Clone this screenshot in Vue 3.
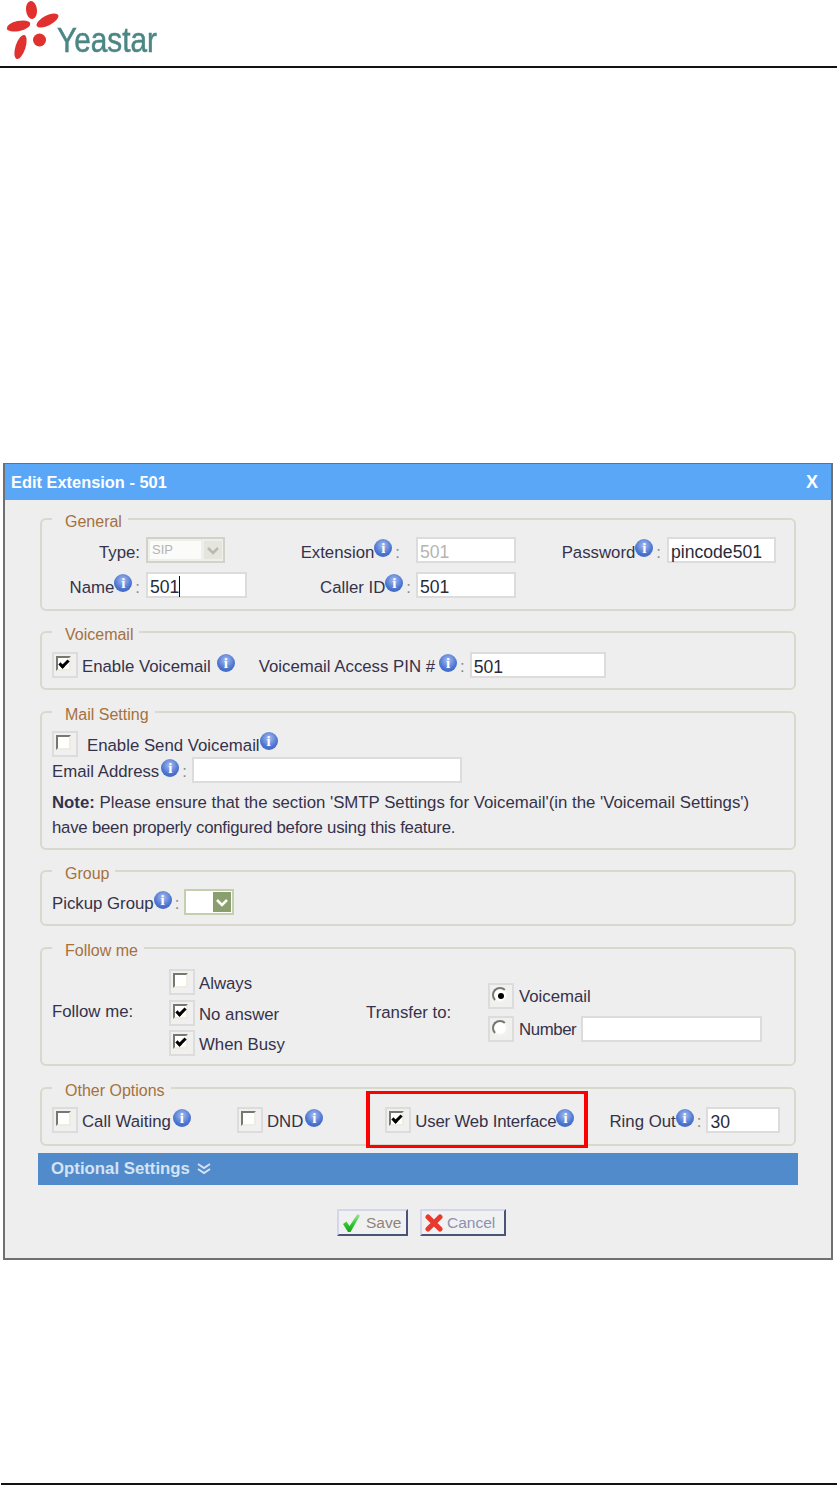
<script setup>
</script>

<template>
  <div class="page">
    <header class="head">
      <svg class="logo" width="200" height="66" viewBox="0 0 200 66">
        <g class="soft" fill="#e0312f">
          <ellipse cx="31.500" cy="10" rx="5.500" ry="9" transform="rotate(-6 31.500 10)" />
          <ellipse cx="47.500" cy="20.500" rx="12" ry="5" transform="rotate(-27 47.500 20.500)" />
          <ellipse cx="18.500" cy="26" rx="12" ry="5" transform="rotate(-12 18.500 26)" />
          <ellipse cx="20.500" cy="47" rx="5" ry="12.500" transform="rotate(18 20.500 47)" />
          <circle cx="39.500" cy="40" r="6.500" />
        </g>
        <text class="soft" x="57" y="52" font-size="35" textLength="100" lengthAdjust="spacingAndGlyphs" fill="#4a8684" stroke="#4a8684" stroke-width="0.500" font-family="'Liberation Sans', sans-serif">Yeastar</text>
      </svg>
    </header>
    <div class="rule"></div>

    <section class="dialog">
      <div class="title"><span>Edit Extension - 501</span><span class="close">X</span></div>
      <div class="body">
        <fieldset class="box general">
          <legend>General</legend>
          <div class="grid">
            <label class="lab">Type:</label>
            <div class="select disabled"><span class="sel-text">SIP</span><span class="sel-btn"><svg width="14" height="9" viewBox="0 0 14 9"><path d="M2 2l5 5 5-5" fill="none" stroke="#b9b9b2" stroke-width="2.500" /></svg></span></div>
            <label class="lab pr16">Extension<i class="info">i</i><span class="colon">:</span></label>
            <div class="input w100 muted">501</div>
            <label class="lab">Password<i class="info">i</i><span class="colon">:</span></label>
            <div class="input w109">pincode501</div>
            <label class="lab">Name<i class="info">i</i><span class="colon">:</span></label>
            <div class="input w101">501<span class="caret"></span></div>
            <label class="lab pr5">Caller ID<i class="info">i</i><span class="colon">:</span></label>
            <div class="input w100">501</div>
          </div>
        </fieldset>

        <fieldset class="box voicemail">
          <legend>Voicemail</legend>
          <div class="row">
            <span class="check on"></span>
            <span class="txt gap4">Enable Voicemail</span>
            <i class="info ml6">i</i>
            <span class="txt ml24">Voicemail Access PIN #</span><i class="info ml4">i</i><span class="txt colon">:</span>
            <div class="input w136 ml5">501</div>
          </div>
        </fieldset>

        <fieldset class="box mail">
          <legend>Mail Setting</legend>
          <div class="row h27">
            <span class="check"></span>
            <span class="txt gap9">Enable Send Voicemail</span><i class="info">i</i>
          </div>
          <div class="row">
            <span class="txt">Email Address</span><i class="info ml2">i</i><span class="txt colon">:</span>
            <div class="input w270 ml5"></div>
          </div>
          <p class="note"><b>Note:</b> Please ensure that the section 'SMTP Settings for Voicemail'(in the 'Voicemail Settings')
            <span class="line2">have been properly configured before using this feature.</span></p>
        </fieldset>

        <fieldset class="box group">
          <legend>Group</legend>
          <div class="row">
            <span class="txt">Pickup Group</span><i class="info">i</i><span class="txt colon">:</span>
            <div class="select green ml5"><span class="sel-text"></span><span class="sel-btn"><svg width="14" height="9" viewBox="0 0 14 9"><path d="M2 2l5 5 5-5" fill="none" stroke="#fff" stroke-width="2.500" /></svg></span></div>
          </div>
        </fieldset>

        <fieldset class="box follow">
          <legend>Follow me</legend>
          <div class="row">
            <span class="f-label">Follow me:</span>
            <div class="stack options">
              <div class="row h30"><span class="check"></span><span class="txt gap4">Always</span></div>
              <div class="row h30"><span class="check on"></span><span class="txt gap4">No answer</span></div>
              <div class="row h30"><span class="check on"></span><span class="txt gap4">When Busy</span></div>
            </div>
            <span class="t-label">Transfer to:</span>
            <div class="stack">
              <div class="row h33"><span class="check radio on"></span><span class="txt-s gap5">Voicemail</span></div>
              <div class="row h33"><span class="check radio"></span><span class="txt-s gap5 tight">Number</span><div class="input w181 ml5"></div></div>
            </div>
          </div>
        </fieldset>

        <fieldset class="box other">
          <legend>Other Options</legend>
          <div class="row other-row">
            <span class="check"></span><span class="txt gap4">Call Waiting</span><i class="info ml2">i</i>
            <span class="check ml46"></span><span class="txt gap4">DND</span><i class="info ml2">i</i>
            <span class="check on ml62"></span><span class="txt gap4 web">User Web Interface</span><i class="info">i</i>
            <span class="txt ml35">Ring Out</span><i class="info">i</i><span class="txt colon">:</span>
            <div class="input w74 ml5">30</div>
            <div class="mark"></div>
          </div>
        </fieldset>

        <div class="optional">Optional Settings <svg width="16" height="14" viewBox="0 0 16 14"><path d="M2 2l6 4 6-4M2 7l6 4 6-4" fill="none" stroke="#d5e3f3" stroke-width="2" /></svg></div>

        <div class="actions">
          <button type="button" class="btn save">
            <svg width="20" height="22" viewBox="0 0 20 22"><defs><linearGradient id="gr" x1="0" y1="0" x2="0" y2="1"><stop offset="0" stop-color="#a5e59a" /><stop offset="0.600" stop-color="#2dc42a" /><stop offset="1" stop-color="#1f9c1e" /></linearGradient></defs><path d="M1 12l3.500-2.500L7.500 14 15.500 2l2.500 1.500L8.500 20H6z" fill="url(#gr)" /></svg>Save
          </button>
          <button type="button" class="btn cancel">
            <svg width="18" height="18" viewBox="0 0 18 18"><path d="M3 3l12 12M15 3L3 15" stroke="#e8392c" stroke-width="5" stroke-linecap="round" /></svg>Cancel
          </button>
        </div>
      </div>
    </section>

    <div class="foot"></div>
  </div>
</template>

<style>
html, body { margin: 0; background: #fff; }
</style>

<style scoped>
.page {
  position: relative;
  width: 837px;
  height: 1485px;
  overflow: hidden;
  background: #fff;
  font-family: "Liberation Sans", Arial, sans-serif;
  font-size: 16.8px;
  color: #35324a;
}
.head { height: 66px; }
.logo { display: block; }
.soft { filter: blur(0.6px); }
.rule { height: 2px; background: #111; }
.dialog {
  margin: 395px 4px 0 3px;
  height: 797px;
  box-sizing: border-box;
  border: 1px solid #6f7072;
  border-width: 1px 2px 2px 2px;
  background: #eee;
}
.title {
  height: 36px;
  background: #5aa7f8;
  color: #fff;
  font-weight: 700;
  font-size: 16.4px;
  display: flex;
  align-items: center;
  justify-content: space-between;
  box-sizing: border-box;
  padding: 1px 13px 0 6px;
}
.close { font-size: 18px; }
.body { padding: 0 33px; }
.box {
  margin: 0 2px;
  padding: 0 10px;
  border: 2px solid #d8d8cc;
  border-radius: 6px;
  min-width: 0;
  box-sizing: border-box;
}
.box legend {
  margin-left: 0;
  padding: 6px 6px 0 13px;
  font-size: 16px;
  line-height: 20px;
  color: #a5713f;
}
.general { margin-top: 6px; height: 105px; padding-top: 5px; }
.voicemail { margin-top: 8px; height: 71px; padding-top: 7px; }
.mail { margin-top: 9px; height: 151px; padding-top: 5px; }
.group { margin-top: 8px; height: 68px; padding-top: 5px; }
.follow { margin-top: 9px; height: 131px; padding-top: 6px; }
.other { margin-top: 9px; height: 71px; padding-top: 6px; }
.grid {
  display: grid;
  grid-template-columns: 94px 101px 169px 100px 151px 109px;
  grid-template-rows: 26px 26px;
  row-gap: 9px;
}
.lab {
  display: flex;
  align-items: center;
  justify-content: flex-end;
  padding: 6px 6px 0 0;
  white-space: nowrap;
}
.pr16 { padding-right: 16px; }
.pr5 { padding-right: 5px; }
.row { display: flex; align-items: center; white-space: nowrap; }
.txt { padding-top: 4px; }
.txt-s { padding-top: 2px; }
.tight { letter-spacing: -0.400px; }
.web { letter-spacing: -0.170px; }
.info {
  display: inline-block;
  flex: none;
  width: 18px;
  height: 18px;
  margin-top: -5px;
  border-radius: 50%;
  background: radial-gradient(circle at 50% 35%, #a6bdf0, #4a73cf 60%, #3a5cb8);
  color: #fff;
  font: 700 15px/18px "Liberation Serif", serif;
  text-align: center;
}
.lab .info { margin-top: -11px; }
.colon { color: #8a8a80; margin-left: 3px; }
.input {
  height: 26px;
  box-sizing: border-box;
  background: #fff;
  border: 2px solid #dcdcdc;
  padding: 0 2px;
  line-height: 26px;
  font-size: 17.6px;
  color: #2a2a3a;
  flex: none;
}
.muted { color: #b5b5b5; }
.w74 { width: 74px; }
.w100 { width: 100px; }
.w101 { width: 101px; }
.w109 { width: 109px; }
.w136 { width: 136px; }
.w181 { width: 181px; }
.w270 { width: 270px; }
.caret {
  display: inline-block;
  width: 1px;
  height: 21px;
  background: #111;
  vertical-align: -4px;
}
.select {
  display: flex;
  align-items: center;
  justify-content: space-between;
  box-sizing: border-box;
  height: 26px;
}
.select.disabled {
  width: 79px;
  border: 2px solid #d2d2c9;
  background: #eeeeea;
  padding: 2px 1px 2px 2px;
}
.sel-text {
  flex: 1;
  height: 100%;
  background: #fbfbf9;
  font-size: 13px;
  color: #b4b4b4;
  line-height: 18px;
  padding-left: 2px;
}
.sel-btn {
  flex: none;
  display: flex;
  align-items: center;
  justify-content: center;
  width: 18px;
  height: 100%;
  margin-left: 3px;
  background: #e5e5de;
}
.select.green {
  width: 50px;
  border: 2px solid #c3cfae;
  padding: 1px;
  background: #fff;
}
.green .sel-text { background: #fff; }
.green .sel-btn { background: #8b9f6e; margin-left: 0; }
.check {
  position: relative;
  flex: none;
  display: block;
  width: 26px;
  height: 26px;
  box-sizing: border-box;
  border: 2px solid #dcdcdc;
  background: #f0f0f0;
}
.check::before {
  content: "";
  position: absolute;
  left: 2px;
  top: 2px;
  width: 15px;
  height: 15px;
  box-sizing: border-box;
  border: 2px solid;
  border-color: #77776f #efece0 #efece0 #77776f;
  background: #fff;
}
.check.on::after {
  content: "";
  position: absolute;
  left: 5px;
  top: 6px;
  width: 7px;
  height: 3px;
  border: solid #000;
  border-width: 0 0 3px 3px;
  transform: rotate(-45deg);
}
.radio::before { border-radius: 50%; width: 16px; height: 16px; border-color: #77776f #f4f4ee #f4f4ee #77776f; }
.radio.on::after {
  left: 8px;
  top: 8px;
  width: 6px;
  height: 6px;
  border: 0;
  border-radius: 50%;
  background: #000;
  transform: none;
}
.gap4 { margin-left: 4px; }
.gap5 { margin-left: 5px; }
.gap9 { margin-left: 9px; }
.ml2 { margin-left: 2px; }
.ml4 { margin-left: 4px; }
.ml5 { margin-left: 5px; }
.ml6 { margin-left: 6px; }
.ml24 { margin-left: 24px; }
.ml35 { margin-left: 35px; }
.ml46 { margin-left: 46px; }
.ml62 { margin-left: 62px; }
.h27 { height: 27px; }
.h30 { height: 30.500px; }
.h33 { height: 33px; }
.note {
  margin: 7px 0 0;
  line-height: 25px;
  width: 720px;
}
.line2 { display: block; letter-spacing: -0.230px; }
.f-label { width: 117px; margin-bottom: 2px; }
.stack { display: flex; flex-direction: column; }
.options { width: 197px; }
.t-label { width: 122px; }
.other-row { position: relative; }
.mark {
  position: absolute;
  left: 314px;
  top: -16px;
  width: 222px;
  height: 57px;
  box-sizing: border-box;
  border: solid #f00;
  border-width: 3px 4px;
}
.optional {
  display: flex;
  align-items: center;
  gap: 6px;
  margin-top: 7px;
  height: 32px;
  background: #528bcb;
  color: #d5e3f3;
  font-weight: 700;
  padding-left: 13px;
}
.actions {
  display: flex;
  justify-content: center;
  gap: 12px;
  margin-top: 24px;
  padding-left: 7px;
}
.btn {
  display: flex;
  align-items: center;
  gap: 4px;
  height: 27px;
  padding: 0 0 0 3px;
  box-sizing: border-box;
  background: #f1f1f1;
  border: 2px solid #d4d6ec;
  border-right-color: #4a5478;
  border-bottom-color: #4a5478;
  font: 15.500px "Liberation Sans", sans-serif;
}
.save { width: 71px; color: #8d8479; }
.cancel { width: 86px; color: #8a92b4; }
.foot {
  position: absolute;
  left: 1px;
  right: 0;
  top: 1483px;
  height: 2px;
  background: #111;
}
</style>
